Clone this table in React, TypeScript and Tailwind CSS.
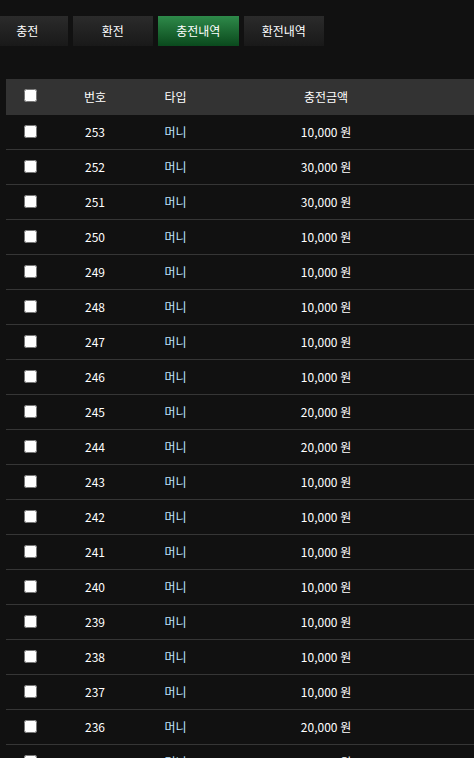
import React from "react";

const amounts: [number, string][] = [
  [253, "10,000"], [252, "30,000"], [251, "30,000"], [250, "10,000"], [249, "10,000"],
  [248, "10,000"], [247, "10,000"], [246, "10,000"], [245, "20,000"], [244, "20,000"],
  [243, "10,000"], [242, "10,000"], [241, "10,000"], [240, "10,000"], [239, "10,000"],
  [238, "10,000"], [237, "10,000"], [236, "20,000"], [235, "10,000"], [234, "10,000"],
];

const font = { fontFamily: '"Noto Sans CJK KR", "Noto Sans", sans-serif' };

function Tab({ label, active }: { label: string; active?: boolean }) {
  return (
    <div
      className={
        "w-[80.5px] h-[30px] shrink-0 flex items-center justify-center text-[12px] text-white " +
        (active
          ? "bg-gradient-to-b from-[#2e8a4a] to-[#0a4a1d]"
          : "bg-gradient-to-b from-[#2b2b2b] to-[#191919]")
      }
    >
      {label}
    </div>
  );
}

function Cb() {
  return <input type="checkbox" className="w-[13px] h-[13px] m-0" />;
}

export default function App() {
  return (
    <div className="w-full h-[758px] bg-[#111111] overflow-hidden text-white" style={font}>
      <div className="flex gap-[5px] ml-[-13px] mt-[16px]">
        <Tab label="충전" />
        <Tab label="환전" />
        <Tab label="충전내역" active />
        <Tab label="환전내역" />
      </div>
      <div className="ml-[6px] mt-[33px] w-[620px]">
        <div className="flex h-[36px] items-center bg-[#333333] text-[12px]">
          <div className="w-[48px] flex justify-center -mt-[4px]"><Cb /></div>
          <div className="w-[82px] text-center">번호</div>
          <div className="w-[79px] text-center">타입</div>
          <div className="w-[222px] text-center">충전금액</div>
        </div>
        {amounts.map(([n, a]) => (
          <div key={n} className="flex h-[35px] items-center border-b border-[#363636] text-[12px]">
            <div className="w-[48px] flex justify-center -mt-[2px]"><Cb /></div>
            <div className="w-[82px] text-center">{n}</div>
            <div className="w-[79px] text-center text-[#bfe4ff]">머니</div>
            <div className="w-[222px] text-center">{a} 원</div>
          </div>
        ))}
      </div>
    </div>
  );
}
